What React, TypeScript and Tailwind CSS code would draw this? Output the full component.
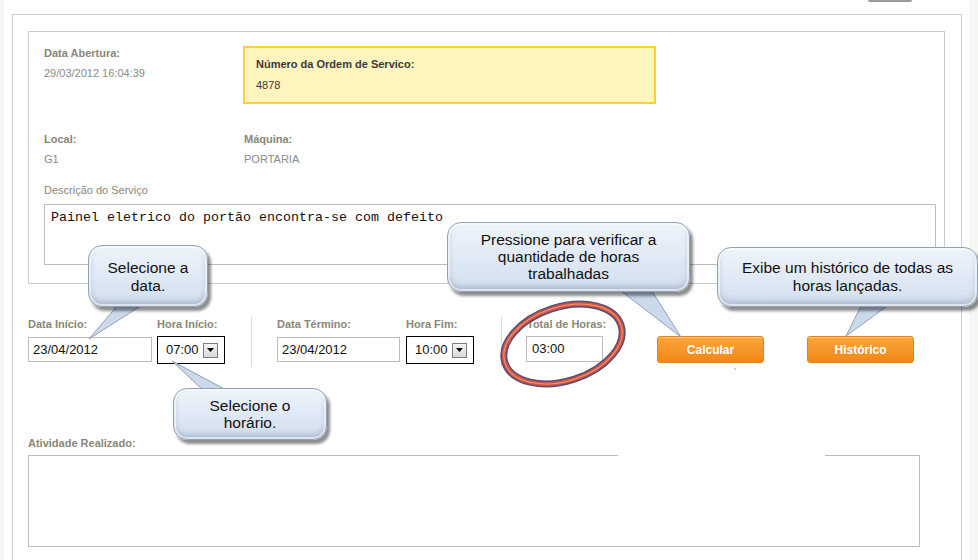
const label = "text-[11px] font-bold leading-[14px] text-[#8b8775]";
const value = "text-[11px] leading-[14px] text-[#8a8a8a]";
const input =
  "flex h-[25px] items-center border border-[#bdbdbd] bg-white pl-[4px] text-[13px] text-[#111]";
const select =
  "flex h-[28px] w-[68px] items-center justify-between border border-black bg-white pl-[8px] pr-[6px] text-[13px] text-[#111]";
const button =
  "flex h-[27px] w-[107px] items-center justify-center rounded-[3px] border border-[#e2821a] bg-gradient-to-b from-[#fba63c] to-[#f2870f] text-[12px] font-bold text-white shadow-[0_1px_0_rgba(255,255,255,0.4)_inset]";
const bubble =
  "absolute flex flex-col items-center rounded-[14px] border border-[#8fa1b9] bg-[linear-gradient(180deg,#eef4fb,#d2dfef)] text-center text-[15.5px] leading-[17px] text-[#111] shadow-[3px_4px_3px_rgba(0,0,0,0.45),inset_0_0_0_2px_rgba(255,255,255,0.6),inset_0_-4px_6px_rgba(80,100,130,0.35)]";

const Arrow = () => (
  <span className="flex h-[15px] w-[15px] items-center justify-center border border-[#7d7d7d] bg-gradient-to-b from-[#f4f4f4] to-[#d8d8d8]">
    <svg width="7" height="4" viewBox="0 0 7 4">
      <path d="M0 0h7L3.5 4z" fill="#000" />
    </svg>
  </span>
);

export default function App() {
  return (
    <div className="relative h-[560px] w-[978px] overflow-hidden bg-[#f6f6f3] font-['Liberation_Sans',Arial,sans-serif]">
      <div className="ml-[4px] h-full w-[965px] bg-white pl-[8px] pt-[14px]">
        <div className="h-[600px] w-[950px] border border-[#cccccc] px-[15px] pt-[16px]">
          {/* dados da ordem */}
          <div className="h-[253px] w-[917px] border border-[#cccccc] px-[15px] pt-[14px]">
            <div className="flex">
              <div className="w-[199px]">
                <div className={label}>Data Abertura:</div>
                <div className={`${value} mt-[6px]`}>29/03/2012 16:04:39</div>
              </div>
              <div className="h-[58px] w-[413px] border-2 border-[#fdd22e] bg-[#fff5bf] pl-[11px] pt-[9px]">
                <div className="text-[11px] font-bold leading-[14px] text-[#3a3a3a]">
                  Número da Ordem de Servico:
                </div>
                <div className="mt-[7px] text-[11px] leading-[14px] text-[#3a3a3a]">4878</div>
              </div>
            </div>

            <div className="mt-[28px] flex">
              <div className="w-[200px]">
                <div className={label}>Local:</div>
                <div className={`${value} mt-[6px]`}>G1</div>
              </div>
              <div>
                <div className={label}>Máquina:</div>
                <div className={`${value} mt-[6px]`}>PORTARIA</div>
              </div>
            </div>

            <div className="mt-[17px] text-[11px] leading-[14px] text-[#8b8775]">
              Descrição do Serviço
            </div>
            <div className="mt-[7px] h-[61px] w-[892px] border border-[#bdbdbd] pl-[6px] pt-[5px] font-['Liberation_Mono','Courier_New',monospace] text-[13.33px] leading-[15px] text-[#111]">
              Painel eletrico do portão encontra-se com defeito
            </div>
          </div>

          {/* horas */}
          <div className="mt-[33px] flex items-start">
            <div>
              <div className={label}>Data Início:</div>
              <div className={`${input} mt-[6px] w-[124px]`}>23/04/2012</div>
            </div>
            <div className="ml-[5px]">
              <div className={label}>Hora Início:</div>
              <div className={`${select} mt-[5px]`}>
                07:00
                <Arrow />
              </div>
            </div>
            <div className="ml-[26px] h-[50px] w-px bg-[#dddddd]" />
            <div className="ml-[25px]">
              <div className={label}>Data Término:</div>
              <div className={`${input} mt-[6px] w-[123px]`}>23/04/2012</div>
            </div>
            <div className="ml-[6px]">
              <div className={label}>Hora Fim:</div>
              <div className={`${select} mt-[5px]`}>
                10:00
                <Arrow />
              </div>
            </div>
            <div className="ml-[27px] h-[50px] w-px bg-[#dddddd]" />
            <div className="ml-[24px] w-[77px]">
              <div className={`${label} whitespace-nowrap pl-px`}>Total de Horas:</div>
              <div className={`${input} mt-[5px] h-[26px] w-[77px] pl-[5px]`}>03:00</div>
            </div>
            <button className={`${button} ml-[54px] mt-[19px]`}>Calcular</button>
            <button className={`${button} ml-[43px] mt-[19px]`}>Histórico</button>
          </div>

          <div className={`${label} mt-[69px]`}>Atividade Realizado:</div>
          <div className="mt-[5px] h-[92px] w-[892px] border border-[#bdbdbd]" />
        </div>
      </div>

      {/* detalhes soltos do print */}
      <div className="absolute left-[868px] top-0 h-[2px] w-[44px] rounded-b-[2px] bg-[#9a9a9a]" />
      <div className="absolute left-[618px] top-[455px] h-[2px] w-[207px] bg-white" />
      <div className="absolute left-[734px] top-[368px] h-[2px] w-[2px] rounded-full bg-[#b8c8de]" />

      {/* balões */}
      <svg className="pointer-events-none absolute inset-0" width="978" height="560">
        <g fill="#cbd9eb" stroke="#8fa1b9" strokeWidth="1">
          <polygon points="122,300 150,300 89,339" />
          <polygon points="172,361 205,392 230,392" />
          <polygon points="617,288 650,288 681,337" />
          <polygon points="862,304 890,304 846,336" />
        </g>
      </svg>

      <div className={`${bubble} left-[88px] top-[245px] h-[62px] w-[120px] pt-[13px] leading-[18px]`}>
        <span>Selecione a</span>
        <span>data.</span>
      </div>
      <div className={`${bubble} left-[173px] top-[388px] h-[52px] w-[154px] pt-[8px]`}>
        <span>Selecione o</span>
        <span>horário.</span>
      </div>
      <div className={`${bubble} left-[447px] top-[222px] h-[70px] w-[243px] pt-[8px]`}>
        <span>Pressione para verificar a</span>
        <span>quantidade de horas</span>
        <span>trabalhadas</span>
      </div>
      <div className={`${bubble} left-[717px] top-[247px] h-[60px] w-[261px] pt-[11px] leading-[18px]`}>
        <span>Exibe um histórico de todas as</span>
        <span>horas lançadas.</span>
      </div>

      {/* marcação à mão */}
      <svg className="pointer-events-none absolute inset-0" width="978" height="560">
        <ellipse cx="563" cy="344" rx="61" ry="37" transform="rotate(-18 563 344)" fill="none" stroke="#3b2d63" strokeWidth="7" opacity="0.85" />
        <ellipse cx="563" cy="344" rx="61" ry="37" transform="rotate(-18 563 344)" fill="none" stroke="#d4553a" strokeWidth="4" />
        <ellipse cx="563" cy="344" rx="61" ry="37" transform="rotate(-18 563 344)" fill="none" stroke="#f2947c" strokeWidth="1" />
      </svg>
    </div>
  );
}
